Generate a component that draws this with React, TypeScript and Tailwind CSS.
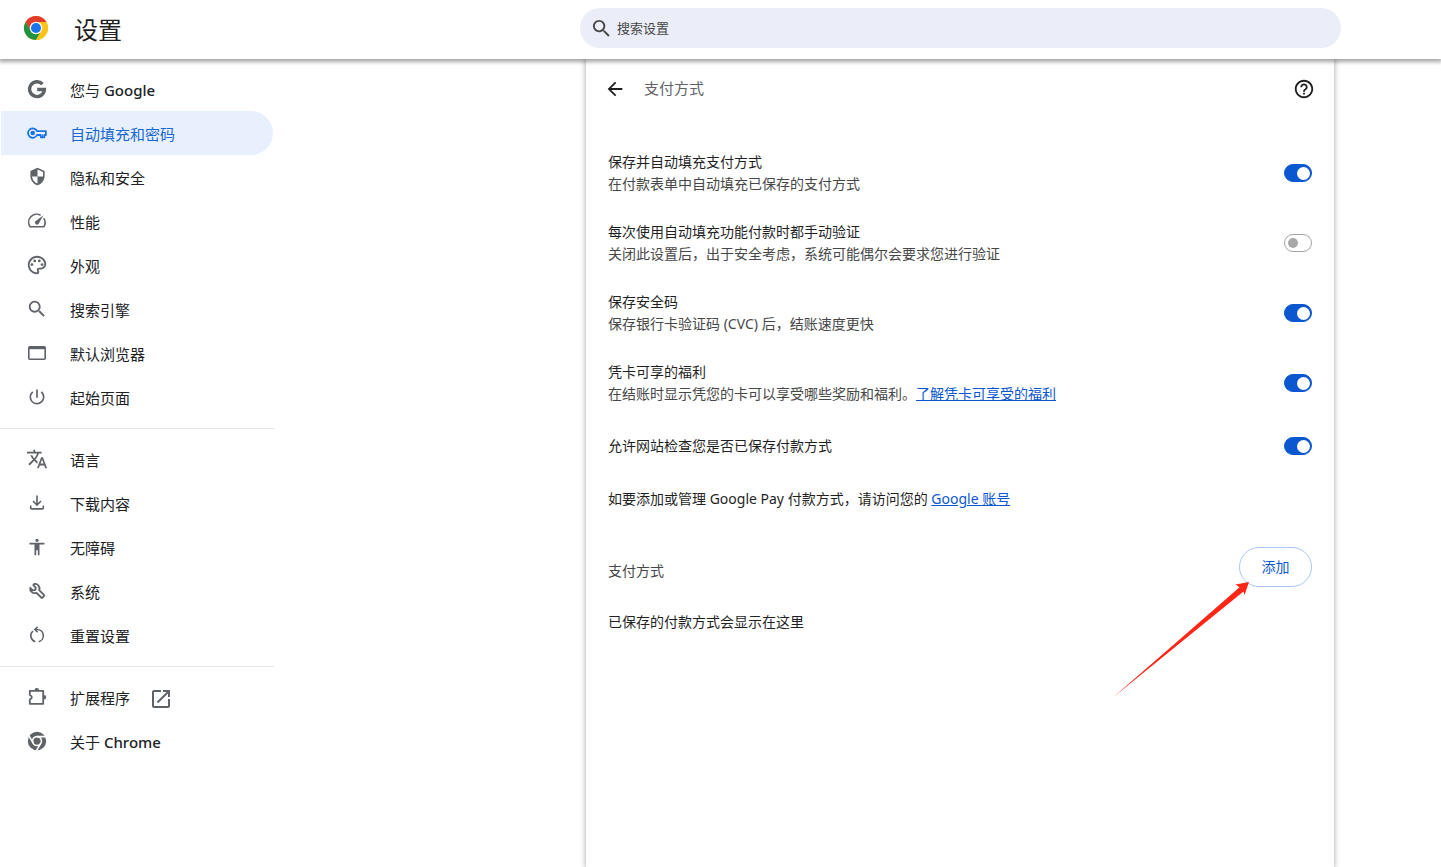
import type { ReactNode } from "react";
import {
  MdSecurity,
  MdOutlinePalette,
  MdSearch,
  MdPowerSettingsNew,
  MdTranslate,
  MdAccessibility,
  MdOpenInNew,
  MdArrowBack,
  MdHelpOutline,
} from "react-icons/md";

function Icon({ children, box = 20 }: { children: ReactNode; box?: number }) {
  return (
    <svg viewBox={`0 0 ${box} ${box}`} className="size-5" fill="none" stroke="currentColor" strokeWidth="1.6" aria-hidden="true">
      {children}
    </svg>
  );
}

const GoogleIcon = () => (
  <Icon>
    <path d="M15.500 5.200A7.400 7.400 0 1 0 17.400 10.500H10.200" strokeWidth="3.400" />
  </Icon>
);
const KeyIcon = () => (
  <Icon>
    <path
      d="M10 8.200A4.700 4.700 0 1 0 10 12h3.800v2.300h3.600V12h1.500V8.200z"
      strokeWidth="1.800"
      strokeLinejoin="round"
    />
    <path d="M15.600 14v-2.600" strokeWidth="1.200" />
    <circle cx="5.700" cy="10" r="2.300" fill="currentColor" stroke="none" />
  </Icon>
);
const SpeedIcon = () => (
  <Icon>
    <path d="M13.6 4.2A8 8 0 0 0 3.1 15.7h13.8a8 8 0 0 0-.2-8.6" strokeWidth="1.6" />
    <path d="M16.4 4.2 8.500 10.200a2 2 0 1 0 3 2.700z" fill="currentColor" stroke="none" />
  </Icon>
);
const WindowIcon = () => (
  <Icon>
    <rect x="1.8" y="3.8" width="16.4" height="12.4" rx="1" />
    <path d="M2 5h16" strokeWidth="2.4" />
  </Icon>
);
const DownloadIcon = () => (
  <Icon>
    <path d="M10 2.5v9.2M6 8l4 4 4-4M3.7 12.5v2.4c0 .6.4 1 1 1h10.6c.6 0 1-.4 1-1v-2.4" />
  </Icon>
);
const WrenchIcon = () => (
  <Icon>
    <path
      d="M7.3 2.9a4.6 4.6 0 0 1 4.9 6.2l4.7 4.7a1 1 0 0 1 0 1.4l-1.3 1.3a1 1 0 0 1-1.4 0l-4.7-4.7a4.6 4.6 0 0 1-6.3-5l2.6 2.6 2.5-.5.4-2.4-2.4-2.4z"
      strokeLinejoin="round"
      strokeWidth="1.8"
    />
  </Icon>
);
const ResetIcon = () => (
  <Icon>
    <path d="M8.3 16.7A6.2 6.2 0 0 1 6 6M11.7 16.7A6.2 6.2 0 0 0 10 4.5H8M10.6 1.7 7.8 4.5l2.8 2.8" />
  </Icon>
);
const PuzzleIcon = () => (
  <Icon>
    <path d="M2.8 3.9h13.4v12.9H2.8v-4.2c2.7-1 2.7-3.6 0-4.6z" strokeLinejoin="round" strokeWidth="1.800" />
    <path d="M7.500 3.400a2.300 2.300 0 0 1 4.600 0zM16.900 8a2.300 2.300 0 0 1 0 4.600z" fill="currentColor" stroke="none" />
  </Icon>
);
const ChromeMono = () => (
  <svg viewBox="0 0 24 24" className="size-5" fill="none" aria-hidden="true">
    <circle cx="12" cy="12" r="11" fill="currentColor" />
    <circle cx="12" cy="12" r="5.3" stroke="#fff" strokeWidth="1.9" />
    <path d="M12 6.7h10.5M7.4 14.6 2.2 5.6M16.6 14.6l-5.2 9" stroke="#fff" strokeWidth="1.9" />
  </svg>
);
const ChromeLogo = () => (
  <svg viewBox="0 0 48 48" className="size-6" aria-hidden="true">
    <circle cx="24" cy="24" r="24" fill="#fbc116" />
    <path d="M24 12h20.8A24 24 0 0 0 3.2 12l10.4 18z" fill="#e33b2e" />
    <path d="M34.4 30 24 48A24 24 0 0 1 3.2 12l10.4 18A12 12 0 0 0 34.4 30z" fill="#229342" />
    <path d="M24 12h20.8A24 24 0 0 1 24 48l10.4-18A12 12 0 0 0 24 12z" fill="#fcc419" />
    <circle cx="24" cy="24" r="12.5" fill="#fff" />
    <circle cx="24" cy="24" r="10" fill="#1a73e8" />
  </svg>
);

type Item = { label: string; latin?: string; icon: ReactNode; active?: boolean; external?: boolean };

const groups: Item[][] = [
  [
    { label: "您与", latin: "Google", icon: <GoogleIcon /> },
    { label: "自动填充和密码", icon: <KeyIcon />, active: true },
    { label: "隐私和安全", icon: <MdSecurity size={19} className="-scale-x-100" /> },
    { label: "性能", icon: <SpeedIcon /> },
    { label: "外观", icon: <MdOutlinePalette size={22} /> },
    { label: "搜索引擎", icon: <MdSearch size={22} /> },
    { label: "默认浏览器", icon: <WindowIcon /> },
    { label: "起始页面", icon: <MdPowerSettingsNew size={20} /> },
  ],
  [
    { label: "语言", icon: <MdTranslate size={22} /> },
    { label: "下载内容", icon: <DownloadIcon /> },
    { label: "无障碍", icon: <MdAccessibility size={20} /> },
    { label: "系统", icon: <WrenchIcon /> },
    { label: "重置设置", icon: <ResetIcon /> },
  ],
  [
    { label: "扩展程序", icon: <PuzzleIcon />, external: true },
    { label: "关于", latin: "Chrome", icon: <ChromeMono /> },
  ],
];

function Sidebar() {
  return (
    <nav aria-label="设置" className="w-[274px] shrink-0 pt-2">
      {groups.map((items, i) => (
        <ul key={i} className={i > 0 ? "mt-[9px] border-t border-[#e4e5e7] pt-2" : ""}>
          {items.map((item) => (
            <li key={item.label}>
              <a
                href="#"
                aria-current={item.active ? "page" : undefined}
                className={`mx-px flex h-11 items-center rounded-r-full pl-[25px] pt-[3px] text-[15px] ${
                  item.active ? "bg-[#e8f0fe] text-[#1967d2]" : "text-[#202124]"
                }`}
              >
                <span
                  className={`flex w-[22px] shrink-0 justify-center pb-1 ${
                    item.active ? "text-[#1a73e8]" : "text-[#5f6368]"
                  }`}
                >
                  {item.icon}
                </span>
                <span className="ml-[22px]">
                  {item.label}
                  {item.latin && <span className="font-medium"> {item.latin}</span>}
                </span>
                {item.external && <MdOpenInNew size={24} className="ml-[19px] text-[#5f6368]" />}
              </a>
            </li>
          ))}
        </ul>
      ))}
    </nav>
  );
}

type Setting = { id: string; title: string; note?: string; link?: string; on: boolean };

const settings: Setting[] = [
  { id: "autofill", title: "保存并自动填充支付方式", note: "在付款表单中自动填充已保存的支付方式", on: true },
  {
    id: "verify",
    title: "每次使用自动填充功能付款时都手动验证",
    note: "关闭此设置后，出于安全考虑，系统可能偶尔会要求您进行验证",
    on: false,
  },
  { id: "cvc", title: "保存安全码", note: "保存银行卡验证码 (CVC) 后，结账速度更快", on: true },
  {
    id: "benefits",
    title: "凭卡可享的福利",
    note: "在结账时显示凭您的卡可以享受哪些奖励和福利。",
    link: "了解凭卡可享受的福利",
    on: true,
  },
  { id: "check", title: "允许网站检查您是否已保存付款方式", on: true },
];

function Toggle({ id, on }: { id: string; on: boolean }) {
  return (
    <input
      id={id}
      type="checkbox"
      role="switch"
      defaultChecked={on}
      className="flex h-[18px] w-7 shrink-0 appearance-none items-center rounded-full border border-[#a3a3a3] px-[3px] before:size-[10px] before:rounded-full before:bg-[#a8a8a8] checked:justify-end checked:border-[#0b57d0] checked:bg-[#0b57d0] checked:px-px checked:before:size-[13px] checked:before:bg-white"
    />
  );
}

function SettingRow({ id, title, note, link, on }: Setting) {
  return (
    <div className={`flex items-center justify-between ${note ? "h-[70px]" : "h-14"}`}>
      <div className="leading-[22px]">
        <label htmlFor={id} className="block">
          {title}
        </label>
        {note && (
          <p className="text-[#474747]">
            {note}
            {link && (
              <a href="#" className="text-[#0b57d0] underline">
                {link}
              </a>
            )}
          </p>
        )}
      </div>
      <Toggle id={id} on={on} />
    </div>
  );
}

export default function App() {
  return (
    <div className="flex h-screen flex-col overflow-hidden bg-white font-['Noto_Sans','Noto_Sans_CJK_SC',sans-serif] text-sm text-[#1f1f1f]">
      <header className="z-10 flex h-[59px] shrink-0 bg-white shadow-[0_2px_4px_1px_rgba(0,0,0,0.35)]">
        <div className="flex flex-1 items-center gap-[26px] pl-6">
          <span className="pb-[3px]">
            <ChromeLogo />
          </span>
          <h1 className="text-2xl">设置</h1>
        </div>
        <label className="mr-[100px] mt-2 flex h-10 w-[761px] items-center rounded-full bg-[#ebeef8] pl-[10px] text-[#474747]">
          <MdSearch size={23} />
          <input
            type="search"
            aria-label="搜索设置"
            placeholder="搜索设置"
            className="ml-1 flex-1 bg-transparent text-[13px] outline-none placeholder:text-[#474747]"
          />
        </label>
      </header>
      <div className="flex min-h-0 flex-1 justify-between">
        <Sidebar />
        <main className="mr-[107px] w-[748px] bg-white px-[22px] shadow-[0_0_5px_1px_rgba(0,0,0,0.28)]">
          <div className="flex h-[60px] items-center">
            <button type="button" aria-label="返回" className="-ml-1">
              <MdArrowBack size={22} />
            </button>
            <h2 className="ml-[18px] text-[15px] text-[#5f6368]">支付方式</h2>
            <button type="button" aria-label="帮助" className="-mr-[3px] ml-auto">
              <MdHelpOutline size={22} />
            </button>
          </div>
          <section className="mt-[19px]">
            {settings.map((s) => (
              <SettingRow key={s.id} {...s} />
            ))}
          </section>
          <p className="mt-[14px] leading-[22px]">
            如要添加或管理 Google Pay 付款方式，请访问您的{" "}
            <a href="#" className="text-[#0b57d0] underline">
              Google 账号
            </a>
          </p>
          <div className="mt-[37px] flex h-10 items-center justify-between">
            <h3 className="pt-2 text-[#474747]">支付方式</h3>
            <div className="relative">
              <button type="button" className="h-10 w-[73px] rounded-full border border-[#a8c7fa] text-[#0b57d0]">
                添加
              </button>
              <svg
                viewBox="0 0 137 116"
                className="pointer-events-none absolute right-[62px] top-[35px] h-[116px] w-[137px]"
                aria-hidden="true"
              >
                <path d="M0 115.500 126.500 5.200 122.500 2.500 136 0 131.500 13 130.500 9.500z" fill="#ff2616" />
              </svg>
            </div>
          </div>
          <p className="mt-6 leading-[22px]">已保存的付款方式会显示在这里</p>
        </main>
      </div>
    </div>
  );
}
